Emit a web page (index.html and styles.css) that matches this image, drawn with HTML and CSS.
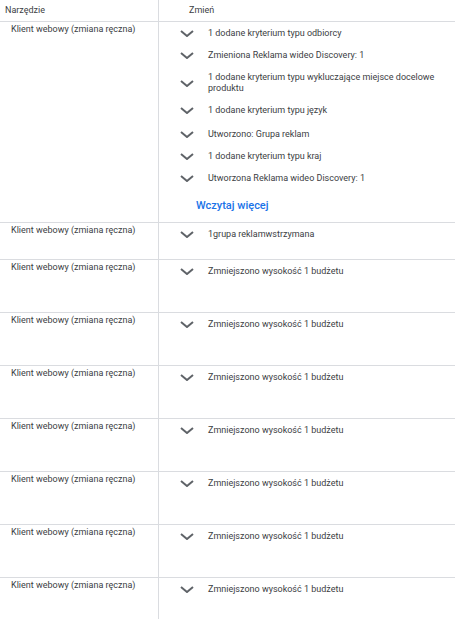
FILE: index.html
```html
<!DOCTYPE html>
<html lang="pl">
  <head>
    <meta charset="UTF-8" />
    <meta name="viewport" content="width=device-width, initial-scale=1.0" />
    <title>Historia zmian</title>
    <link rel="stylesheet" href="styles.css">
  </head>
  <body>
    <div class="changes">
      <div class="row head">
        <div class="cell tool">Narzędzie</div>
        <div class="cell change">Zmień</div>
      </div>

      <div class="row">
        <div class="cell tool">Klient webowy (zmiana ręczna)</div>
        <div class="cell change">
          <ul class="items">
            <li><svg class="chev" viewBox="0 0 14 7"><polyline points="1,1 7,6 13,1" /></svg><span>1 dodane kryterium typu odbiorcy</span></li>
            <li><svg class="chev" viewBox="0 0 14 7"><polyline points="1,1 7,6 13,1" /></svg><span>Zmieniona Reklama wideo Discovery: 1</span></li>
            <li><svg class="chev" viewBox="0 0 14 7"><polyline points="1,1 7,6 13,1" /></svg><span>1 dodane kryterium typu wykluczające miejsce docelowe produktu</span></li>
            <li class="loose"><svg class="chev" viewBox="0 0 14 7"><polyline points="1,1 7,6 13,1" /></svg><span>1 dodane kryterium typu język</span></li>
            <li><svg class="chev" viewBox="0 0 14 7"><polyline points="1,1 7,6 13,1" /></svg><span>Utworzono: Grupa reklam</span></li>
            <li><svg class="chev" viewBox="0 0 14 7"><polyline points="1,1 7,6 13,1" /></svg><span>1 dodane kryterium typu kraj</span></li>
            <li><svg class="chev" viewBox="0 0 14 7"><polyline points="1,1 7,6 13,1" /></svg><span>Utworzona Reklama wideo Discovery: 1</span></li>
          </ul>
          <a class="more" href="#">Wczytaj więcej</a>
        </div>
      </div>

      <div class="row short">
        <div class="cell tool">Klient webowy (zmiana ręczna)</div>
        <div class="cell change">
          <ul class="items">
            <li><svg class="chev" viewBox="0 0 14 7"><polyline points="1,1 7,6 13,1" /></svg><span>1grupa reklamwstrzymana</span></li>
          </ul>
        </div>
      </div>

      <div class="row tall">
        <div class="cell tool">Klient webowy (zmiana ręczna)</div>
        <div class="cell change">
          <ul class="items">
            <li><svg class="chev" viewBox="0 0 14 7"><polyline points="1,1 7,6 13,1" /></svg><span>Zmniejszono wysokość 1 budżetu</span></li>
          </ul>
        </div>
      </div>
      <div class="row tall">
        <div class="cell tool">Klient webowy (zmiana ręczna)</div>
        <div class="cell change">
          <ul class="items">
            <li><svg class="chev" viewBox="0 0 14 7"><polyline points="1,1 7,6 13,1" /></svg><span>Zmniejszono wysokość 1 budżetu</span></li>
          </ul>
        </div>
      </div>
      <div class="row tall">
        <div class="cell tool">Klient webowy (zmiana ręczna)</div>
        <div class="cell change">
          <ul class="items">
            <li><svg class="chev" viewBox="0 0 14 7"><polyline points="1,1 7,6 13,1" /></svg><span>Zmniejszono wysokość 1 budżetu</span></li>
          </ul>
        </div>
      </div>
      <div class="row tall">
        <div class="cell tool">Klient webowy (zmiana ręczna)</div>
        <div class="cell change">
          <ul class="items">
            <li><svg class="chev" viewBox="0 0 14 7"><polyline points="1,1 7,6 13,1" /></svg><span>Zmniejszono wysokość 1 budżetu</span></li>
          </ul>
        </div>
      </div>
      <div class="row tall">
        <div class="cell tool">Klient webowy (zmiana ręczna)</div>
        <div class="cell change">
          <ul class="items">
            <li><svg class="chev" viewBox="0 0 14 7"><polyline points="1,1 7,6 13,1" /></svg><span>Zmniejszono wysokość 1 budżetu</span></li>
          </ul>
        </div>
      </div>
      <div class="row tall">
        <div class="cell tool">Klient webowy (zmiana ręczna)</div>
        <div class="cell change">
          <ul class="items">
            <li><svg class="chev" viewBox="0 0 14 7"><polyline points="1,1 7,6 13,1" /></svg><span>Zmniejszono wysokość 1 budżetu</span></li>
          </ul>
        </div>
      </div>
      <div class="row tall">
        <div class="cell tool">Klient webowy (zmiana ręczna)</div>
        <div class="cell change">
          <ul class="items">
            <li><svg class="chev" viewBox="0 0 14 7"><polyline points="1,1 7,6 13,1" /></svg><span>Zmniejszono wysokość 1 budżetu</span></li>
          </ul>
        </div>
      </div>
    </div>
  </body>
</html>
```

FILE: styles.css
```css
* {
  margin: 0;
  padding: 0;
  box-sizing: border-box;
  font-family: Roboto, "Liberation Sans", sans-serif;
}
html,
body {
  height: 100%;
  overflow: hidden;
  background: #fff;
}
.changes {
  font-size: 9px;
  line-height: 11px;
  color: #3c4043;
}
.row {
  display: flex;
  border-bottom: 1px solid #dadce0;
}
.row .cell.tool {
  width: 159px;
  flex-shrink: 0;
  padding: 2px 4px 0 11px;
  border-right: 1px solid #dadce0;
}
.row .cell.change {
  flex: 1;
}
.head {
  height: 22px;
}
.head .cell {
  display: flex;
  align-items: center;
  padding-bottom: 1px;
}
.head .cell.tool {
  padding: 0 0 1px 5px;
}
.head .cell.change {
  padding-left: 30px;
}
.short {
  height: 37px;
}
.tall {
  height: 53px;
}
.items {
  list-style: none;
}
.items li {
  display: flex;
  align-items: center;
  padding: 6px 12px 5px 21px;
}
.items li.loose {
  padding-bottom: 7px;
}
.items li span {
  flex: 1;
  padding-left: 14px;
}
.chev {
  width: 14px;
  height: 7px;
  flex-shrink: 0;
  fill: none;
  stroke: #5f6368;
  stroke-width: 2;
}
.more {
  display: block;
  margin: 10px 0 9px 37px;
  font-size: 11px;
  line-height: 14px;
  font-weight: 500;
  color: #1a73e8;
  text-decoration: none;
}
```
